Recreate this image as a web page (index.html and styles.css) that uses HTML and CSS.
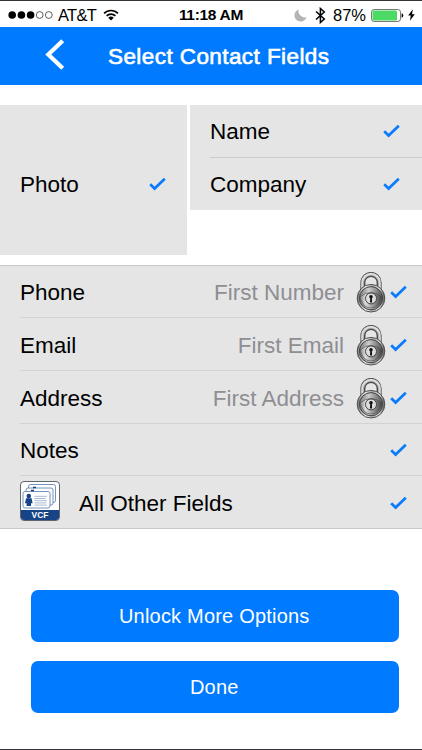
FILE: index.html
```html
<!DOCTYPE html>
<html lang="en">
<head>
<meta charset="utf-8">
<title>Select Contact Fields</title>
<link rel="stylesheet" href="styles.css">
</head>
<body>
<svg class="defs" width="0" height="0">
  <defs>
    <linearGradient id="metal" x1="0" x2="1" y1="0" y2="0">
      <stop offset="0" stop-color="#777"/><stop offset=".3" stop-color="#eee"/><stop offset=".55" stop-color="#aaa"/><stop offset=".8" stop-color="#ddd"/><stop offset="1" stop-color="#555"/>
    </linearGradient>
    <linearGradient id="face" x1="0" x2="1" y1="0" y2="0">
      <stop offset="0" stop-color="#777"/><stop offset=".4" stop-color="#ccc"/><stop offset="1" stop-color="#555"/>
    </linearGradient>
    <linearGradient id="band" x1="0" x2="1" y1="0" y2="0">
      <stop offset="0" stop-color="#888"/><stop offset=".25" stop-color="#ddd"/><stop offset="1" stop-color="#444"/>
    </linearGradient>
    <symbol id="check" viewBox="0 0 17 14"><path d="M1.2 7.2 5.6 11.5 15.8 1.8" fill="none" stroke="#0a7cfb" stroke-width="2.7"/></symbol>
    <symbol id="lock" viewBox="0 0 30 41">
      <path d="M6.9 19V10.5a8.1 8.1 0 0 1 16.2 0V19" fill="none" stroke="#4a4a4a" stroke-width="5"/>
      <path d="M6.6 19V10.5a8.4 8.4 0 0 1 16.8 0V19" fill="none" stroke="#ddd" stroke-width="2.8"/>
      <path d="M7.4 17V11a7.6 7.6 0 0 1 15.2 0v6" fill="none" stroke="#999" stroke-width=".7"/>
      <circle cx="15" cy="26.2" r="13.8" fill="url(#metal)" stroke="#444" stroke-width=".9"/>
      <circle cx="15" cy="26.2" r="11.6" fill="url(#face)" stroke="#444" stroke-width="1"/>
      <path d="M4 25q11-9 22 0-3 11-11 11T4 25" fill="url(#band)" stroke="#444" stroke-width=".6"/>
      <circle cx="15" cy="26.4" r="5.5" fill="#ddd" stroke="#444" stroke-width="1"/>
      <circle cx="15" cy="24.7" r="1.8" fill="#111"/><path d="M14.3 24.5h1.5l.3 6h-2.1z" fill="#111"/>
    </symbol>
  </defs>
</svg>
<main class="screen">
  <div class="status">
    <div class="carrier">
      <svg width="46" height="10" viewBox="0 0 46 10"><g fill="#000"><circle cx="4.2" cy="5" r="3.8"/><circle cx="13.4" cy="5" r="3.8"/><circle cx="22.6" cy="5" r="3.8"/></g><g fill="none" stroke="#333" stroke-width=".8"><circle cx="31.7" cy="5" r="3.4"/><circle cx="40.8" cy="5" r="3.4"/></g></svg>
      <span class="network">AT&amp;T</span>
      <svg class="wifi" width="16" height="12" viewBox="0 0 18 13"><path d="M1.2 4.7a11 11 0 0 1 15.6 0M4 7.5a7.2 7.2 0 0 1 10 0" fill="none" stroke="#000" stroke-width="1.8"/><path d="M5.9 9.6a4.4 4.4 0 0 1 6.2 0L9 12.7z"/></svg>
    </div>
    <span class="time">11:18 AM</span>
    <div class="indicators">
      <svg width="13" height="13" viewBox="0 0 13 13"><path d="M4.6.5A6.2 6.2 0 1 0 12.6 8.2 6.5 6.5 0 0 1 4.6.5" fill="#b4b4b4"/></svg>
      <svg class="bluetooth" width="11" height="17" viewBox="0 0 11 17"><path d="M1 4.5 9.3 12 5.4 15.5V1.5L9.3 5 1 12.5" fill="none" stroke="#000" stroke-width="1.5"/></svg>
      <span class="percent">87%</span>
      <svg class="battery" width="33" height="13" viewBox="0 0 33 13"><rect x=".5" y=".5" width="29" height="12" rx="2.6" fill="#fff" stroke="#555" stroke-width=".8"/><rect x="1.5" y="1.5" width="24.5" height="10" rx="1.3" fill="#4cd964"/><path d="M30.6 4.3q1.7.3 1.7 2.2t-1.7 2.2z"/></svg>
      <svg class="bolt" width="7" height="12" viewBox="0 0 7 12"><path d="M4.8.3.2 6.5h2.6L1.9 11.7 6.8 5.3H4z"/></svg>
    </div>
  </div>
  <header class="header">
    <svg width="20" height="31" viewBox="0 0 20 31"><path d="M17.7 1.7 3.3 15.5 17.7 29.3" fill="none" stroke="#fff" stroke-width="4.2"/></svg>
    <h1 class="title">Select Contact Fields</h1>
  </header>
  <section class="cards">
    <div class="photo"><span class="label">Photo</span><svg class="check"><use href="#check"/></svg></div>
    <div class="identity">
      <div class="entry"><span class="label">Name</span><svg class="check"><use href="#check"/></svg></div>
      <div class="entry"><span class="label">Company</span><svg class="check"><use href="#check"/></svg></div>
    </div>
  </section>
  <section class="list">
    <div class="row"><span class="label">Phone</span><span class="value">First Number</span><svg class="lock"><use href="#lock"/></svg><svg class="check"><use href="#check"/></svg></div>
    <div class="row"><span class="label">Email</span><span class="value">First Email</span><svg class="lock"><use href="#lock"/></svg><svg class="check"><use href="#check"/></svg></div>
    <div class="row"><span class="label">Address</span><span class="value">First Address</span><svg class="lock"><use href="#lock"/></svg><svg class="check"><use href="#check"/></svg></div>
    <div class="row"><span class="label">Notes</span><svg class="check"><use href="#check"/></svg></div>
    <div class="row">
      <div class="vcf">
        <svg width="37" height="28" viewBox="0 0 37 28"><g fill="#fff" stroke="#5279aa" stroke-width=".8"><rect x="7.5" y="2.5" width="27" height="18" rx="2"/><rect x="5" y="6" width="27" height="17" rx="2"/><rect x="2" y="9.5" width="27" height="16.5" rx="2"/></g><path d="M12 5.5h3M10 8.5h3" stroke="#17407e" stroke-width="1.4"/><circle cx="7.8" cy="14.1" r="2.3" fill="#174387"/><path d="M5 16.3h5.6l1 4.9H10V24H5.6v-2.8H4z" fill="#174387"/><path d="M13.5 14.3h12.5M13.5 16.5h11M13.5 18.7h12.5M13.5 20.9h12M13.5 23.1h12.5" stroke="#a8b9d2" stroke-width="1"/></svg>
        <span class="vcf-name">VCF</span>
      </div>
      <span class="label">All Other Fields</span><svg class="check"><use href="#check"/></svg>
    </div>
  </section>
  <div class="actions">
    <button class="button">Unlock More Options</button>
    <button class="button">Done</button>
  </div>
</main>
</body>
</html>
```
FILE: styles.css
```css
* { box-sizing: border-box; }
body { margin: 0; background: #fff; color: #000; font-family: "Liberation Sans", Arial, sans-serif; }
svg { display: block; flex: none; }
.defs { position: absolute; }
.screen { width: 422px; height: 750px; overflow: hidden; border-top: 1px solid #353337; border-bottom: 1px solid #353337; }
.status { height: 26px; display: grid; grid-template-columns: 170px 82px 170px; align-items: center; font-size: 16.5px; line-height: 26px; padding-top: 1px; }
.carrier { display: flex; align-items: center; padding-left: 8px; }
.network { width: 38px; margin-left: 4px; font-size: 16.5px; letter-spacing: -.7px; }
.wifi { margin-left: 7px; }
.time { text-align: center; font-weight: 700; font-size: 15.5px; letter-spacing: -.3px; white-space: nowrap; }
.indicators { display: flex; align-items: center; padding-left: 42px; }
.bluetooth { margin-left: 8px; }
.percent { margin-left: 7px; font-size: 16.5px; }
.battery { margin-left: 5px; }
.bolt { margin-left: 4px; }
.header { height: 58px; background: #007aff; display: flex; align-items: center; padding-left: 45px; color: #fff; }
.header svg { margin-top: -3px; }
.title { margin: 2px 0 0 43px; font-size: 22.5px; font-weight: 400; -webkit-text-stroke: .65px #fff; letter-spacing: .42px; white-space: nowrap; }
.cards { margin-top: 20px; height: 150px; display: grid; grid-template-columns: 187px 232px; gap: 3px; align-items: start; }
.photo { height: 150px; background: #e5e5e5; display: flex; align-items: center; padding: 8px 21px 0 20px; }
.identity { height: 105px; background: #e5e5e5; padding-left: 20px; }
.entry { height: 53px; display: flex; align-items: center; padding-right: 22px; }
.entry:first-child { border-bottom: 1px solid #cbcbcd; }
.entry:last-child { height: 52px; }
.label { padding-top: 2px; font-size: 22.5px; line-height: 26px; white-space: nowrap; }
.check { width: 17px; height: 14px; margin-left: auto; }
.list { margin-top: 10px; background: #e5e5e5; border-top: 1px solid #c8c8ca; display: grid; grid-template-rows: 52px 53px 53px 52px 53px; }
.row { margin-left: 20px; padding: 1px 15px 0 0; display: flex; align-items: center; border-bottom: 1px solid #d2d2d5; }
.row:last-child { margin-left: 0; padding-left: 20px; border-color: #c8c8ca; }
.value { margin-left: auto; padding-top: 2px; font-size: 22.5px; line-height: 26px; color: #8e8e93; white-space: nowrap; }
.lock { width: 30px; height: 41px; margin: 1px 0 0 12px; }
.lock + .check { margin-left: 4px; }
.vcf { width: 40px; height: 40px; margin: -3px 19px 0 0; border: 1px solid #60666e; border-radius: 4px; background: #fff; overflow: hidden; }
.vcf-name { display: block; height: 10px; background: #174387; color: #fff; font-size: 8.5px; font-weight: 700; line-height: 10px; text-align: center; }
.actions { padding: 60.5px 23px 0 30.5px; display: grid; gap: 18.5px; }
.button { height: 52.5px; border: 0; border-radius: 7px; background: #007aff; color: #fff; font: 20px "Liberation Sans", Arial, sans-serif; letter-spacing: .2px; padding: 2px 1px 0 0; }
```
